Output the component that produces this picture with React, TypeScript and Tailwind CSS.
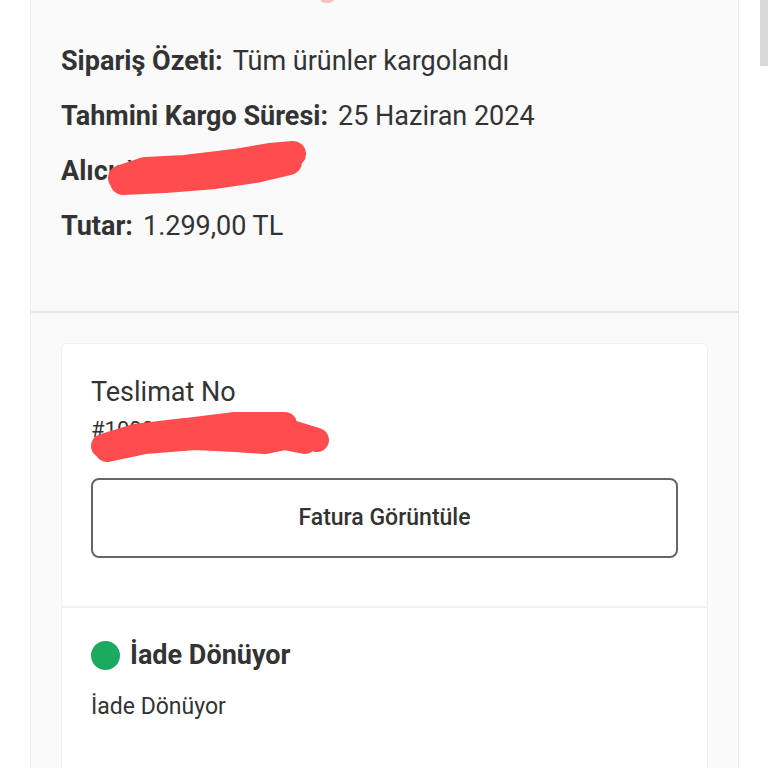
import React from "react";

function Scribble1() {
  return (
    <svg
      className="absolute left-[44px] top-[-8px] pointer-events-none"
      width="215"
      height="62"
      viewBox="0 0 215 62"
    >
      <path
        d="M16 42 L40 34 L80 32 L130 26 L165 20 L188 18 M18 46 L60 44 L110 40 L150 34 L184 26"
        fill="none"
        stroke="#ff4d4f"
        strokeWidth="26"
        strokeLinecap="round"
        strokeLinejoin="round"
      />
    </svg>
  );
}

function Scribble2() {
  return (
    <svg
      className="absolute left-[-6px] top-[-6px] pointer-events-none"
      width="260"
      height="66"
      viewBox="0 0 260 66"
    >
      <path
        d="M18 44 L50 34 L100 28 L150 26 L200 28 L232 38 M22 48 L60 40 L110 36 L150 38 L180 40 L200 36 L220 40 M70 32 L150 22 L200 22"
        fill="none"
        stroke="#ff4d4f"
        strokeWidth="24"
        strokeLinecap="round"
        strokeLinejoin="round"
      />
    </svg>
  );
}

function Row({ label, value, children }: { label: string; value?: string; children?: React.ReactNode }) {
  return (
    <div className="relative flex h-[55px] items-center gap-[10px] text-[27px] text-[#333333]">
      <span className="font-bold">{label}</span>
      {value && <span>{value}</span>}
      {children}
    </div>
  );
}

export default function App() {
  return (
    <div
      className="relative flex h-[768px] w-[768px] overflow-hidden bg-white"
      style={{ fontFamily: "Roboto, 'Noto Sans', sans-serif" }}
    >
      <div className="ml-[30px] flex w-[709px] flex-col border-x border-[#ececec] bg-[#fafafa]">
        <div className="relative border-b-2 border-[#e6e6e6] px-[30px] pt-[34px] pb-[57px]">
          <div className="absolute left-[288px] top-[-10px] h-[13px] w-[16px] rounded-full bg-[#f5a5a5] opacity-70" />
          <Row label="Sipariş Özeti:" value="Tüm ürünler kargolandı" />
          <Row label="Tahmini Kargo Süresi:" value="25 Haziran 2024" />
          <Row label="Alıcı:">
            <span className="ml-[-6px]">Xxxxx Xxxx</span>
            <Scribble1 />
          </Row>
          <Row label="Tutar:" value="1.299,00 TL" />
        </div>
        <div className="px-[30px] pt-[30px]">
          <div className="rounded-[5px] border border-[#f0f0f0] bg-white">
            <div className="px-[29px] pt-[32px] pb-[48px]">
              <div className="text-[27px] leading-[32px] text-[#333333]">Teslimat No</div>
              <div className="relative h-[44px] text-[22px] leading-[44px] text-[#333333]">
                #1000000000
                <Scribble2 />
              </div>
              <div className="mt-[26px] flex h-[80px] items-center justify-center rounded-[8px] border-2 border-[#666666] text-[23px] font-medium text-[#333333]">
                Fatura Görüntüle
              </div>
            </div>
            <div className="h-[2px] bg-[#f0f0f0]" />
            <div className="px-[29px] pt-[31px] pb-[80px]">
              <div className="flex items-center gap-[10px]">
                <div className="h-[29px] w-[29px] rounded-full bg-[#1aab5e]" />
                <span className="text-[27px] font-bold leading-[32px] text-[#333333]">İade Dönüyor</span>
              </div>
              <div className="mt-[22px] text-[23px] leading-[28px] text-[#333333]">İade Dönüyor</div>
            </div>
          </div>
        </div>
      </div>
      <div className="absolute right-0 top-0 h-[66px] w-[8px] bg-[#d9d9d9]" />
    </div>
  );
}
